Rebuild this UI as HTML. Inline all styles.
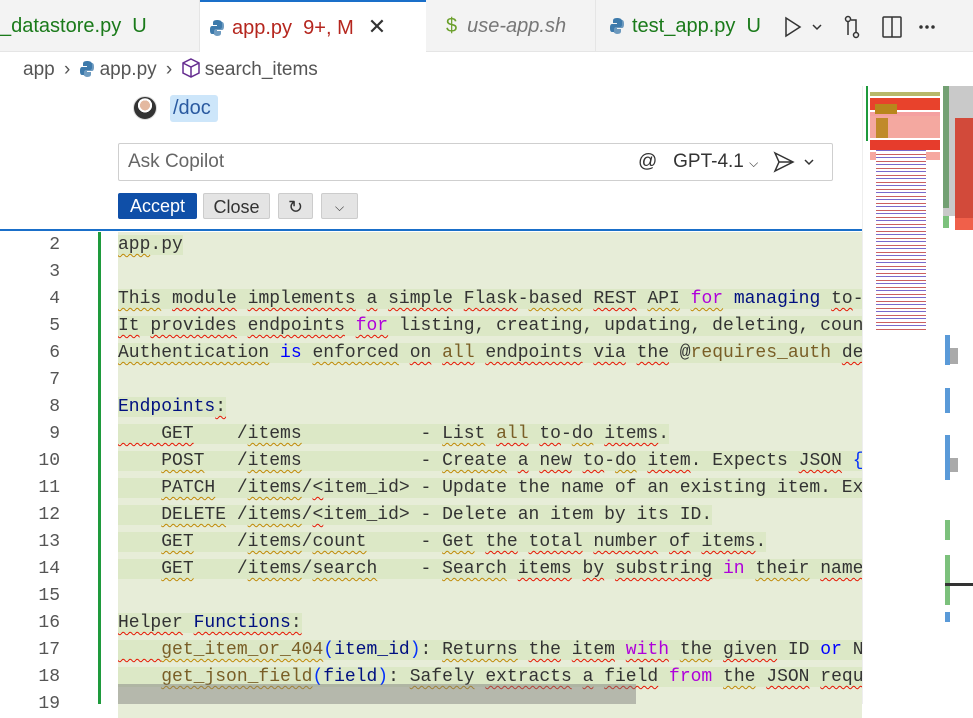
<!DOCTYPE html>
<html><head><meta charset="utf-8"><style>
*{margin:0;padding:0;box-sizing:border-box}
body{width:973px;height:704px;overflow:hidden;background:#fff;font-family:"Liberation Sans",sans-serif;position:relative}
.abs{position:absolute}
.tabs{left:0;top:0;width:973px;height:52px;background:#f3f3f3;border-bottom:1px solid #e5e5e5}
.tab{position:absolute;top:0;height:52px;font-size:20px;line-height:52px;white-space:nowrap}
.py{display:inline-block;width:14px;height:16px;vertical-align:-2px;margin-right:8px}
.code{font-family:"Liberation Mono","DejaVu Sans Mono",monospace;font-size:18px}
.ln{position:absolute;left:0;width:60px;text-align:right;color:#555;font-family:"Liberation Mono",monospace;font-size:18px}
.row{position:absolute;left:118px;width:744px;height:27px;background:#e7edd8;white-space:pre;overflow:hidden;line-height:27px;color:#333}
.row span.h{background:#dce8c6}
.kw{color:#af00db}.bl{color:#0000ff}.nv{color:#001080}.br{color:#795e26}.yl{color:#0431fa}
.sq{text-decoration:underline wavy #e51400;text-decoration-thickness:1px;text-underline-offset:4px}
.sy{text-decoration:underline wavy #bf8803;text-decoration-thickness:1px;text-underline-offset:4px}
.btn{position:absolute;top:193px;height:26px;border-radius:2px;font-size:18px;line-height:26px;text-align:center}
</style></head><body>
<div class="abs tabs"></div>
<div class="tab" style="left:0;width:200px;border-right:1px solid #e5e5e5;color:#1a7a1a"><span>_datastore.py&nbsp; U</span></div>
<div class="tab" style="left:200px;width:226px;background:#fff;border-top:2px solid #1a6fc9;color:#b5261e;line-height:50px;height:53px;padding-left:10px"><svg class="py" viewBox="0 0 14 16"><path d="M7 0C3 0 3 2 3 3v2h4v1H2C0 6 0 9 0 10s0 4 2 4h2v-3c0-1 1-2 2-2h4c1 0 2-1 2-2V3c0-2-2-3-5-3z" fill="#3d7aab"/><path d="M7 16c4 0 4-2 4-3v-2H7v-1h5c2 0 2-3 2-4s0-4-2-4h-1v3c0 1-1 2-2 2H5c-1 0-2 1-2 2v3c0 2 2 4 4 4z" fill="#3d7aab" opacity=".75"/></svg>app.py&nbsp; 9+, M<span style="color:#333;margin-left:14px;font-size:22px">✕</span></div>
<div class="tab" style="left:426px;width:170px;border-right:1px solid #e5e5e5;color:#777;font-style:italic;padding-left:20px"><span style="color:#6a9f2a;font-style:normal;margin-right:10px">$</span>use-app.sh</div>
<div class="tab" style="left:596px;width:180px;color:#1a7a1a;padding-left:14px"><svg class="py" viewBox="0 0 14 16"><path d="M7 0C3 0 3 2 3 3v2h4v1H2C0 6 0 9 0 10s0 4 2 4h2v-3c0-1 1-2 2-2h4c1 0 2-1 2-2V3c0-2-2-3-5-3z" fill="#3d7aab"/><path d="M7 16c4 0 4-2 4-3v-2H7v-1h5c2 0 2-3 2-4s0-4-2-4h-1v3c0 1-1 2-2 2H5c-1 0-2 1-2 2v3c0 2 2 4 4 4z" fill="#3d7aab" opacity=".75"/></svg>test_app.py&nbsp; U</div>
<svg class="abs" style="left:780px;top:14px" width="180" height="26" viewBox="0 0 180 26" fill="none" stroke="#333" stroke-width="1.5"><path d="M6 4l14 9-14 9z"/><path d="M33 11l4 4 4-4"/><circle cx="68" cy="5" r="2.5"/><circle cx="76" cy="21" r="2.5"/><path d="M68 8v13M76 18V6h-5"/><rect x="103" y="3" width="18" height="20" rx="1"/><path d="M112 3v20"/><circle cx="141" cy="13" r="1" fill="#333"/><circle cx="147" cy="13" r="1" fill="#333"/><circle cx="153" cy="13" r="1" fill="#333"/></svg>
<div class="abs" style="left:23px;top:58px;font-size:19px;color:#555;line-height:24px;white-space:nowrap">app <span style="margin:0 4px">›</span> <svg class="py" style="margin-right:6px" viewBox="0 0 14 16"><path d="M7 0C3 0 3 2 3 3v2h4v1H2C0 6 0 9 0 10s0 4 2 4h2v-3c0-1 1-2 2-2h4c1 0 2-1 2-2V3c0-2-2-3-5-3z" fill="#3d7aab"/><path d="M7 16c4 0 4-2 4-3v-2H7v-1h5c2 0 2-3 2-4s0-4-2-4h-1v3c0 1-1 2-2 2H5c-1 0-2 1-2 2v3c0 2 2 4 4 4z" fill="#3d7aab" opacity=".75"/></svg>app.py <span style="margin:0 4px">›</span> <svg width="18" height="20" viewBox="0 0 18 20" style="vertical-align:-3px" fill="none" stroke="#652d90" stroke-width="1.5"><path d="M9 1l8 4v10l-8 4-8-4V5z M1 5l8 4 8-4 M9 9v10"/></svg> search_items</div>
<div class="abs" style="left:133px;top:96px;width:24px;height:24px;border-radius:50%;background:radial-gradient(circle at 50% 38%,#e4b9a0 0 28%,#fff 29% 40%,#333 41% 100%);border:1px solid #ddd"></div>
<div class="abs" style="left:170px;top:95px;width:48px;height:27px;background:#cde6fa;border-radius:3px;color:#2a5aa0;font-size:20px;line-height:27px;padding-left:3px">/doc</div>
<div class="abs" style="left:118px;top:143px;width:715px;height:38px;border:1px solid #cfcfcf;border-radius:2px"></div>
<div class="abs" style="left:128px;top:150px;font-size:19px;color:#666;line-height:24px">Ask Copilot</div>
<div class="abs" style="left:638px;top:150px;font-size:19px;color:#333;line-height:24px;white-space:nowrap">@&nbsp;&nbsp; GPT-4.1 <span style="font-size:12px">⌵</span></div>
<svg class="abs" style="left:773px;top:150px" width="45" height="24" fill="none" stroke="#333" stroke-width="1.5"><path d="M2 3l18 9-18 9 4-9z M6 12h14"/><path d="M32 10l4 4 4-4"/></svg>
<div class="btn" style="left:118px;width:79px;background:#0f4fa8;color:#fff">Accept</div>
<div class="btn" style="left:203px;width:67px;background:#e4e4e4;border:1px solid #ccc;color:#333">Close</div>
<div class="btn" style="left:278px;width:35px;background:#e4e4e4;border:1px solid #ccc;color:#333">↻</div>
<div class="btn" style="left:321px;width:37px;background:#e4e4e4;border:1px solid #ccc;color:#333;font-size:12px">⌵</div>
<div class="abs" style="left:0;top:229px;width:862px;height:2px;background:#1a6fc9"></div>
<div class="abs" style="left:98px;top:232px;width:3px;height:472px;background:#1e9a3c"></div>
<div class="ln" style="top:232px;line-height:27px">2<br>3<br>4<br>5<br>6<br>7<br>8<br>9<br>10<br>11<br>12<br>13<br>14<br>15<br>16<br>17<br>18<br>19</div>
<div class="code">
<div class="row" style="top:232px"><span class="h sy">app</span><span class="h">.py</span></div>
<div class="row" style="top:259px"></div>
<div class="row" style="top:286px"><span class="h"><span class="sy">This</span> <span class="sq">module</span> <span class="sq">implements</span> <span class="sq">a</span> <span class="sq">simple</span> <span class="sq">Flask</span>-<span class="sy">based</span> <span class="sq">REST</span> <span class="sy">API</span> <span class="kw sy">for</span> <span class="nv">managing</span> <span class="sq">to</span>-do items</span></div>
<div class="row" style="top:313px"><span class="h"><span class="sq">It</span> <span class="sq">provides</span> <span class="sq">endpoints</span> <span class="kw sq">for</span> listing, creating, updating, deleting, counting</span></div>
<div class="row" style="top:340px"><span class="h"><span class="sy">Authentication</span> <span class="bl">is</span> <span class="sy">enforced</span> <span class="sq">on</span> <span class="br sq">all</span> <span class="sq">endpoints</span> <span class="sq">via</span> <span class="sq">the</span> @<span class="br">requires_auth</span> <span class="sq">decorator</span></span></div>
<div class="row" style="top:367px"></div>
<div class="row" style="top:394px"><span class="h"><span class="nv">Endpoints</span><span class="sq">:</span></span></div>
<div class="row" style="top:421px"><span class="h"><span class="sq">    GET</span>    /<span class="sy">items</span>           - <span class="sy">List</span> <span class="br sq">all</span> <span class="sq">to</span>-<span class="sy">do</span> <span class="sq">items</span>.</span></div>
<div class="row" style="top:448px"><span class="h">    <span class="sy">POST</span>   /<span class="sy">items</span>           - <span class="sy">Create</span> <span class="sq">a</span> <span class="sq">new</span> <span class="sq">to</span>-<span class="sy">do</span> <span class="sq">item</span>. Expects <span class="sq">JSON</span> <span class="yl">{</span>"name": ...}</span></div>
<div class="row" style="top:475px"><span class="h">    <span class="sy">PATCH</span>  /<span class="sy">items</span>/<span class="sq">&lt;</span>item_id&gt; - Update the name of an existing item. Expects</span></div>
<div class="row" style="top:502px"><span class="h">    <span class="sy">DELETE</span> /<span class="sy">items</span>/<span class="sq">&lt;</span>item_id&gt; - Delete an item by its ID.</span></div>
<div class="row" style="top:529px"><span class="h">    <span class="sy">GET</span>    /<span class="sy">items</span>/<span class="sy">count</span>     - <span class="sy">Get</span> <span class="sq">the</span> <span class="sq">total</span> <span class="sq">number</span> <span class="sq">of</span> <span class="sq">items</span>.</span></div>
<div class="row" style="top:556px"><span class="h">    <span class="sy">GET</span>    /<span class="sy">items</span>/<span class="sy">search</span>    - <span class="sy">Search</span> <span class="sq">items</span> <span class="sq">by</span> <span class="sq">substring</span> <span class="kw">in</span> <span class="sy">their</span> <span class="sq">name</span>.</span></div>
<div class="row" style="top:583px"></div>
<div class="row" style="top:610px"><span class="h"><span class="sq">Helper</span> <span class="nv sq">Functions</span><span class="sq">:</span></span></div>
<div class="row" style="top:637px"><span class="h"><span class="sq">    </span><span class="br sy">get_item_or_404</span><span class="yl">(</span><span class="nv">item_id</span><span class="yl">)</span>: <span class="sy">Returns</span> <span class="sq">the</span> <span class="sq">item</span> <span class="kw sq">with</span> <span class="sy">the</span> <span class="sq">given</span> ID <span class="bl">or</span> None</span></div>
<div class="row" style="top:664px"><span class="h">    <span class="br sy">get_json_field</span><span class="yl">(</span><span class="nv">field</span><span class="yl">)</span>: <span class="sy">Safely</span> <span class="sq">extracts</span> <span class="sq">a</span> <span class="sq">field</span> <span class="kw">from</span> <span class="sy">the</span> <span class="sq">JSON</span> <span class="sq">request</span></span></div>
<div class="row" style="top:691px"></div>
</div>
<div class="abs" style="left:118px;top:684px;width:518px;height:20px;background:rgba(120,120,120,.45)"></div>
<div class="abs" style="left:862px;top:86px;width:111px;height:618px;background:#fff;border-left:1px solid #eee"></div>
<div class="abs" style="left:870px;top:92px;width:70px;height:4px;background:#b8b86a"></div>
<div class="abs" style="left:870px;top:98px;width:70px;height:12px;background:#e8422c"></div>
<div class="abs" style="left:870px;top:112px;width:70px;height:12px;background:#f4a0a0"></div>
<div class="abs" style="left:875px;top:104px;width:22px;height:10px;background:#b8861c"></div>
<div class="abs" style="left:870px;top:116px;width:70px;height:22px;background:#f4a8a0"></div>
<div class="abs" style="left:876px;top:118px;width:12px;height:20px;background:#c08a2a"></div>
<div class="abs" style="left:870px;top:140px;width:70px;height:10px;background:#e63c2c"></div>
<div class="abs" style="left:870px;top:152px;width:70px;height:8px;background:#f6a8a0"></div>
<div class="abs" style="left:866px;top:86px;width:2px;height:55px;background:#1e9a3c"></div>
<div class="abs" style="left:943px;top:86px;width:6px;height:122px;background:#7cc17c"></div>
<div class="abs" style="left:943px;top:86px;width:30px;height:130px;background:rgba(100,100,100,.35)"></div>
<div class="abs" style="left:955px;top:118px;width:18px;height:100px;background:#d24a3a"></div>
<div class="abs" style="left:943px;top:216px;width:6px;height:12px;background:#7cc17c"></div>
<div class="abs" style="left:955px;top:218px;width:18px;height:12px;background:#f0604a"></div>
<div class="abs" style="left:876px;top:150px;width:50px;height:180px;background:repeating-linear-gradient(#7a6acc 0 1px,#fff 1px 4px,#cc6060 4px 5px,#fff 5px 7px)"></div>
<div class="abs" style="left:945px;top:335px;width:5px;height:30px;background:#5a9ad8"></div>
<div class="abs" style="left:950px;top:348px;width:8px;height:16px;background:#aaa"></div>
<div class="abs" style="left:945px;top:388px;width:5px;height:25px;background:#5a9ad8"></div>
<div class="abs" style="left:945px;top:435px;width:5px;height:45px;background:#5a9ad8"></div>
<div class="abs" style="left:950px;top:458px;width:8px;height:14px;background:#aaa"></div>
<div class="abs" style="left:945px;top:520px;width:5px;height:20px;background:#7cc17c"></div>
<div class="abs" style="left:945px;top:555px;width:5px;height:50px;background:#7cc17c"></div>
<div class="abs" style="left:945px;top:583px;width:28px;height:3px;background:#333"></div>
<div class="abs" style="left:945px;top:612px;width:5px;height:10px;background:#5a9ad8"></div>
</body></html>
